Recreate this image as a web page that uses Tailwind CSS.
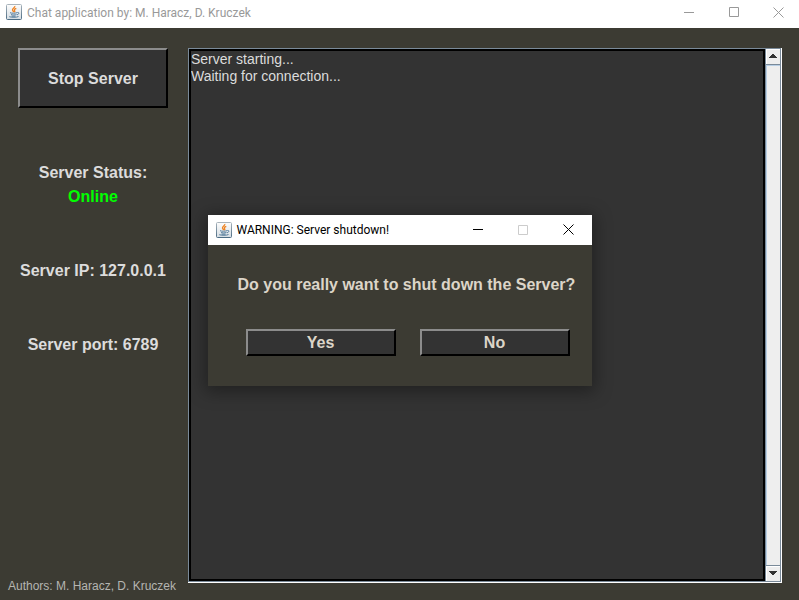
<!DOCTYPE html>
<html lang="en">
<head>
<meta charset="utf-8">
<meta name="viewport" content="width=device-width, initial-scale=1">
<title>Chat application by: M. Haracz, D. Kruczek</title>
<script src="https://cdn.jsdelivr.net/npm/@tailwindcss/browser@4"></script>
</head>
<body class="relative flex h-screen flex-col overflow-hidden bg-[#3c3b33] font-['Liberation_Sans',Arial,sans-serif] text-[#dcdcdc]">
<svg class="absolute size-0" aria-hidden="true">
  <defs>
    <linearGradient id="tile" x1="0" y1="0" x2="0" y2="1"><stop offset="0" stop-color="#fdfdfd"/><stop offset="1" stop-color="#d5dde3"/></linearGradient>
    <linearGradient id="edge" x1="0" y1="0" x2="0" y2="1"><stop offset="0" stop-color="#a9b4bc"/><stop offset="1" stop-color="#4c6c84"/></linearGradient>
  </defs>
  <symbol id="java" viewBox="0 0 16 16">
    <rect x=".5" y=".5" width="15" height="15" rx="1" fill="url(#tile)" stroke="url(#edge)"/>
    <path d="M8.800 2c.6 1.600-2.900 2.300-2.300 4.100.2.700 1 1.200 1.200 2 M10.300 4.300C8.500 5 7.900 5.700 8.600 6.600c.5.700.3 1.100-.1 1.600" fill="none" stroke="#ee8322" stroke-width="1.300"/>
    <path d="M4 8.700c1.500.7 5.200.6 7 0M5 10.600c1.500.5 4 .5 5.500 0M11.300 8.500c2.200-.5 2.100 1.700-.3 2.300M3.300 12.700c2 .8 7.200.8 9.200-.2M5.500 12.200h4" fill="none" stroke="#557c9b"/>
  </symbol>
</svg>

<header class="flex h-7 shrink-0 items-center bg-white pb-1 pl-[6px] text-[#999999]">
  <svg class="size-4 shrink-0" aria-hidden="true"><use href="#java"/></svg>
  <h1 class="ml-[5px] flex-1 truncate pt-[2px] font-[Roboto,'Open_Sans',sans-serif] text-xs">Chat application by: M. Haracz, D. Kruczek</h1>
  <div class="flex">
    <button type="button" aria-label="Minimize" class="grid h-6 w-[45px] place-items-center"><svg class="size-[11px]" viewBox="0 0 11 11" stroke="currentColor"><path d="M0 5.500h10"/></svg></button>
    <button type="button" aria-label="Maximize" class="grid h-6 w-[45px] place-items-center"><svg class="size-[11px]" viewBox="0 0 11 11" fill="none" stroke="currentColor"><path d="M.5.5h9v9h-9z"/></svg></button>
    <button type="button" aria-label="Close" class="grid h-6 w-[42px] place-items-center"><svg class="size-[11px]" viewBox="0 0 11 11" stroke="currentColor"><path d="M.5.5l10 10M10.500.5l-10 10"/></svg></button>
  </div>
</header>

<main class="flex min-h-0 flex-1 pt-5 pr-[17px]">
  <aside class="flex w-[188px] shrink-0 flex-col pb-1">
    <button type="button" class="mr-5 ml-[18px] h-[60px] border-2 border-t-[#8c8c8c] border-r-black border-b-black border-l-[#8c8c8c] bg-[#333333] pt-[2px] font-bold">Stop Server</button>
    <dl class="mt-[53px] mr-[2px] flex flex-col gap-[50px] text-center leading-6 font-bold">
      <div><dt>Server Status:</dt><dd class="text-[#00ff00]">Online</dd></div>
      <div><dt class="inline">Server IP:</dt> <dd class="inline">127.0.0.1</dd></div>
      <div><dt class="inline">Server port:</dt> <dd class="inline">6789</dd></div>
    </dl>
    <p class="mt-auto pl-2 text-xs leading-5 whitespace-nowrap text-[#b5b5b1]">Authors: M. Haracz, D. Kruczek</p>
  </aside>

  <section aria-label="Server log" class="mb-[17px] flex min-w-0 flex-1 border-r border-b border-white">
    <div class="flex min-w-0 flex-1 border border-[#7a8a99]">
      <textarea readonly aria-label="Log output" class="min-w-0 flex-1 resize-none overflow-hidden border-2 border-black bg-[#333333] text-sm leading-[17px] outline-none">Server starting...
Waiting for connection...</textarea>
      <div class="flex w-[15px] flex-col border-l border-[#7a8a99] bg-[#eeeeee]">
        <button type="button" aria-label="Scroll up" class="grid h-4 place-items-center border-b border-[#7a8a99] pb-[2px] shadow-[inset_1px_1px_0_white]"><svg class="h-1 w-2" viewBox="0 0 8 4" fill="#333333" shape-rendering="crispEdges"><path d="M3 0h2v1h1v1h1v1h1v1H0V3h1V2h1V1h1z"/></svg></button>
        <div class="flex-1 border-t border-l border-[#b8cfe5]"></div>
        <button type="button" aria-label="Scroll down" class="grid h-4 place-items-center border-t border-[#7a8a99] pb-[2px] shadow-[inset_1px_1px_0_white]"><svg class="h-1 w-2" viewBox="0 0 8 4" fill="#333333" shape-rendering="crispEdges"><path d="M0 0h8v1H7v1H6v1H5v1H3V3H2V2H1V1H0z"/></svg></button>
      </div>
    </div>
  </section>
</main>

<div role="dialog" aria-labelledby="dialog-title" class="absolute top-1/2 left-1/2 -mt-[85px] -ml-[192px] w-96 bg-[#3c3b33] shadow-[0_3px_16px_3px_rgba(0,0,0,0.35)]">
  <div class="flex h-[30px] items-center bg-white pl-2 text-black">
    <svg class="size-4 shrink-0" aria-hidden="true"><use href="#java"/></svg>
    <h2 id="dialog-title" class="ml-[5px] flex-1 font-[Roboto,'Open_Sans',sans-serif] text-xs">WARNING: Server shutdown!</h2>
    <button type="button" aria-label="Minimize" class="grid h-full w-[45px] place-items-center"><svg class="size-[11px]" viewBox="0 0 11 11" stroke="currentColor"><path d="M0 4.500h10"/></svg></button>
    <button type="button" aria-label="Maximize" disabled class="grid h-full w-[45px] place-items-center text-[#cccccc]"><svg class="size-[11px]" viewBox="0 0 11 11" fill="none" stroke="currentColor"><path d="M.5.5h9v9h-9z"/></svg></button>
    <button type="button" aria-label="Close" class="grid h-full w-[46px] place-items-center pb-[2px]"><svg class="size-[11px]" viewBox="0 0 11 11" stroke="currentColor"><path d="M.5.5l10 10M10.500.5l-10 10"/></svg></button>
  </div>
  <div class="px-[22px] pt-7 pb-[30px] font-bold text-[#dcd5c8]">
    <p class="pl-2 leading-6 whitespace-nowrap">Do you really want to shut down the Server?</p>
    <div class="mt-8 flex gap-6 pl-4">
      <button type="button" class="h-[27px] flex-1 border-2 border-t-[#8c8c8c] border-r-black border-b-black border-l-[#8c8c8c] bg-[#333333] leading-[23px]">Yes</button>
      <button type="button" class="h-[27px] flex-1 border-2 border-t-[#8c8c8c] border-r-black border-b-black border-l-[#8c8c8c] bg-[#333333] leading-[23px]">No</button>
    </div>
  </div>
</div>
</body>
</html>
